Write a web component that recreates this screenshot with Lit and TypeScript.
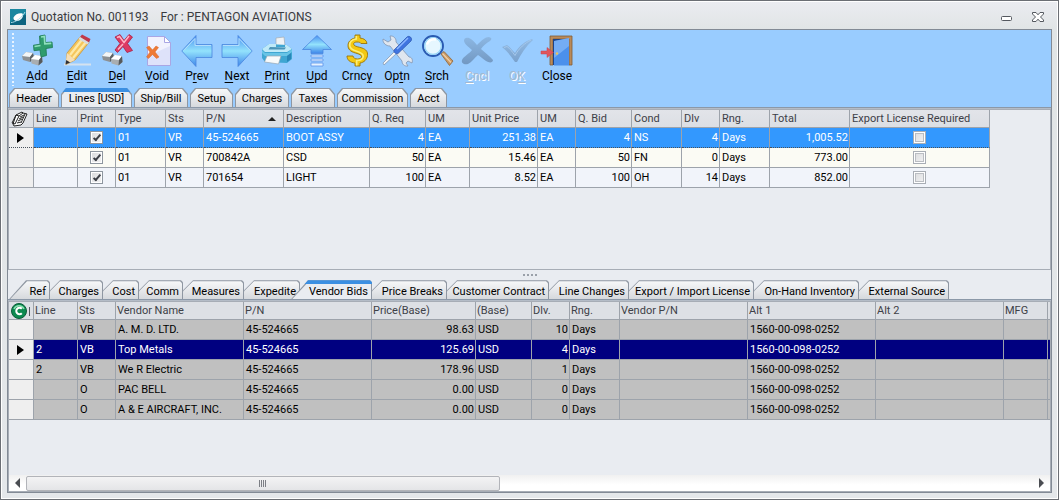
import { LitElement, html, css, svg, nothing } from "lit";
import type { TemplateResult } from "lit";
import { customElement, property } from "lit/decorators.js";
import { classMap } from "lit/directives/class-map.js";
import { styleMap } from "lit/directives/style-map.js";

interface Column {
  label: string;
  width: number;
  align?: "right";
  check?: boolean;
  sorted?: boolean;
}

interface Tab {
  label: string;
  width: number;
  active?: boolean;
}

interface Tool {
  label: string;
  key: number;
  icon: TemplateResult;
  disabled?: boolean;
}

const arrowFill = svg`
  <linearGradient id="g" x1="0" y1="0" x2="0" y2="1">
    <stop offset="0" stop-color="#4a90f2"/><stop offset=".5" stop-color="#93e2fc"/><stop offset="1" stop-color="#3f86ea"/>
  </linearGradient>`;

const boxes = svg`
  <path d="M1 22l4-4 7 1 1 5-4 4-7-2z" fill="#8d9194"/>
  <path d="M1 22l4-4 7 1-3 4z" fill="#f4f6f7"/>
  <path d="M9 23l3-4 1 5-4 4z" fill="#5d6164"/>
  <path d="M10 25l4-4 7 1 .5 6-4 3.500-7-2z" fill="#a9adb0"/>
  <path d="M10 25l4-4 7 1-3 4z" fill="#fff"/>
  <path d="M18 26l3-4 .5 6-4 3.500z" fill="#55595c"/>`;

const icons = {
  add: svg`${boxes}
    <path d="M18.500 2l5.500-1 .5 7.500 6.500-.5.5 5.500-6.500 1 .5 7-5.500 1.500-1-7-6 .7-.5-5.500 6.500-1z" fill="#2f9c6d" stroke="#1c7a50" stroke-width=".8"/>
    <path d="M20 3l3.300-.6.5 7.500 6.500-.5" fill="none" stroke="#8fe0bd" stroke-width="1.600"/>
    <path d="M13.500 12.500l6-1" fill="none" stroke="#8fe0bd" stroke-width="1.400"/>`,
  edit: svg`
    <path d="M3 30.500h27" stroke="#d5e2ee" stroke-width="2"/>
    <path d="M6 19L19 3l9 5.500L14 26l-9 4.500z" fill="#f6c65b" stroke="#c48e34" stroke-width=".7"/>
    <path d="M9 21L21.500 5M12 24L25 8" stroke="#fde9a8" stroke-width="2.200"/>
    <path d="M19 3l2-2.500 8.500 4.500-1.500 3.500z" fill="#c0394b"/>
    <path d="M17.500 5L19 3l9 5.500-1.500 2z" fill="#d8dbe0"/>
    <path d="M6 19l8 7-9.500 4.500z" fill="#f5deb8"/>
    <path d="M5.200 26l4 2.500-4.700 2z" fill="#2d2f38"/>`,
  del: svg`${boxes}
    <path d="M14 3l5-2.500 4 6 5-6L31.500 3l-5 6.500 5 7-5.500 2-4-6-5.500 6-2.500-2.500 5-6.500z" fill="#dc3a62" stroke="#a81d43" stroke-width=".8"/>
    <path d="M16 3.500l2.500-1 4.500 6 5-6.500M17 15.500l5-5.500" fill="none" stroke="#ffb4c6" stroke-width="1.500"/>`,
  void: svg`
    <path d="M6.500 2.500h17l6 6v23h-23z" fill="#f1f2fe" stroke="#a9a6e4"/>
    <path d="M7 22l22-10v19H7z" fill="#d6dcf8" opacity=".7"/>
    <path d="M23.500 2.500v6h6z" fill="#fff" stroke="#a9a6e4"/>
    <path d="M5.500 13.500l2.500-1.500 3.500 4 3.500-4 2.500 1.500-3.500 4.500 4 5-2.500 1.500-4-4-4 4-2-1.500 3.500-5z" fill="#ee7a35" stroke="#d9662a" stroke-width=".5"/>`,
  prev: svg`${arrowFill}
    <path d="M.8 17L15 1.500v9h16v13H15v9z" fill="url(#g)" stroke="#4a86de" stroke-width=".8"/>
    <path d="M2.800 16.500L14 4.500v7h16" fill="none" stroke="#b4defd" stroke-width="1"/>`,
  next: svg`${arrowFill}
    <path d="M31.200 17L17 1.500v9H1v13h16v9z" fill="url(#g)" stroke="#4a86de" stroke-width=".8"/>
    <path d="M29.200 16.500L18 4.500v7H2" fill="none" stroke="#b4defd" stroke-width="1"/>`,
  print: svg`
    <path d="M15 4l8-1 1 9-9 1z" fill="#eef2f5" stroke="#a4acb4" stroke-width=".7"/>
    <path d="M1 15l7-5 18 1 5 4v10l-5 4-22-1-3-4z" fill="#3fa6d2"/>
    <path d="M1 15l7-5h7v3h9l0-2 2 0 5 4-5 3H4z" fill="#bfe9f8"/>
    <path d="M9 13l16 .5-1.500 2H7.500z" fill="#4a94b8"/>
    <path d="M1 16l3 3h22l5-4v3l-5 4H4l-3-3z" fill="#68c4e6"/>
    <path d="M6 22h14l-2.500 8-14-2z" fill="#f8fafb" stroke="#98a8b4" stroke-width=".7"/>
    <path d="M26 22l4-3v6l-4 3z" fill="#2886b8"/>`,
  upd: svg`${arrowFill}
    <path d="M16 1.500L30.500 15.500H22v4H10v-4H1.500z" fill="url(#g)" stroke="#4a86de" stroke-width=".8"/>
    <path d="M10 21h12v2H10zM10 25h12v2H10zM10 29h12v3H10z" fill="#e5f2ff" stroke="#5b93ea" stroke-width=".8"/>`,
  crncy: svg`
    <path d="M14 1h5v3c4 .5 6.500 2 7 5.500h-6C19.500 8.500 18 8 16 8c-3 0-4 1.500-3 3s5 2 8 3c4 1.500 6 3.500 5.500 7.500S23 28.500 19 29v3h-5v-3c-5-.5-8-3-8-7h6c.5 2 2 3 4.500 3s4-1 4-2.500-2-2.300-6-3.500C9 17.500 7 15 7 11.500S9.500 5 14 4z" fill="#f3c813" stroke="#98740a" stroke-width=".9"/>
    <path d="M15.300 2v3C11 5.500 8.700 8 8.700 11.200s3 4.800 7 6.100 6.500 2.300 6.500 5-2.500 4.200-6.500 4.200v5" fill="none" stroke="#fdee7a" stroke-width="1.600"/>`,
  optn: svg`
    <path d="M2 5l5 3 3-2-1-4c4-.5 6.500 3 6 6l13 15c3 0 4 3 3 6l-4-2-2 2 2 3c-4 .5-6-2-6-5L9 12c-4 0-7.500-3-7-7z" fill="#dfe6ef" stroke="#8496b0" stroke-width=".8"/>
    <path d="M3 31l-1-2 12-12 2 2z" fill="#f1f4f8" stroke="#8090a8" stroke-width=".7"/>
    <path d="M13 16L26 3c2-2 6 1 4 4L17 19.500c-2 1-5-1.500-4-3.500z" fill="#3f74e0" stroke="#2a54ad" stroke-width=".7"/>
    <path d="M16 15L27 4" stroke="#8db8ff" stroke-width="1.400"/>`,
  srch: svg`
    <path d="M20 20l3-2.500L32 27l-3.500 4.500z" fill="#c99966" stroke="#8f6437" stroke-width=".8"/>
    <path d="M21.500 19.500L30 28.500" stroke="#f0cfa5" stroke-width="1.200"/>
    <circle cx="12" cy="12" r="10" fill="#e6f7ff" stroke="#2a5bb2" stroke-width="1.900"/>
    <circle cx="12" cy="12" r="8.300" fill="none" stroke="#8fd3f8" stroke-width="1.200"/>
    <path d="M6 10.500c1-4 5-6 9-5" fill="none" stroke="#fff" stroke-width="2.400"/>`,
  cncl: svg`
    <linearGradient id="c" x1="0" y1="0" x2="0" y2="1"><stop offset="0" stop-color="#8cb7e3"/><stop offset="1" stop-color="#7298c2"/></linearGradient>
    <path d="M5 4c3-1 6 1 11 7 5-5 8-8 12-8 3 1 3 2 1 4-4 2-7 5-9 8 4 4 9 7 12 11 0 3-4 3-7 1-3-2-5-4-8-6-4 3-6 7-10 9-4 1-7-1-6-4 2-4 7-6 10-10-4-4-7-5-8-9 0-2 1-3 2-3z" fill="url(#c)"/>`,
  ok: svg`
    <linearGradient id="k" x1="0" y1="0" x2="0" y2="1"><stop offset="0" stop-color="#91bae4"/><stop offset="1" stop-color="#7aa2cd"/></linearGradient>
    <path d="M1 13l5-2c3 2 5 5 8 8C18 12 24 7 31 5l1 1c-7 6-12 14-16 22h-2C10 22 6 17 1 13z" fill="url(#k)"/>
    <path d="M3 13.500l3-1c3 2 5 5 8 9C18 14 24 9 30 6" fill="none" stroke="#a5c8ec" stroke-width="1"/>`,
  close: svg`
    <path d="M9 2h22v29h-3V5H12v26H9z" fill="#b98a5a" stroke="#7d5a36" stroke-width=".8"/>
    <path d="M12 5h16v26H12z" fill="#1c4388"/>
    <path d="M13 7l15-3v27.500l-15 0z" fill="#4b90ec"/>
    <path d="M13 7l15-3v8L13 24z" fill="#8abdf9" opacity=".65"/>
    <circle cx="16" cy="19.500" r="1.200" fill="#ecc65a"/>
    <path d="M0 17h6v-3.500l6.500 5L6 23.500V20H0z" fill="#e0555c" stroke="#c8424a" stroke-width=".5"/>`,
};

const tools: Tool[] = [
  { label: "Add", key: 0, icon: icons.add },
  { label: "Edit", key: 0, icon: icons.edit },
  { label: "Del", key: 0, icon: icons.del },
  { label: "Void", key: 0, icon: icons.void },
  { label: "Prev", key: 1, icon: icons.prev },
  { label: "Next", key: 0, icon: icons.next },
  { label: "Print", key: 0, icon: icons.print },
  { label: "Upd", key: 0, icon: icons.upd },
  { label: "Crncy", key: 4, icon: icons.crncy },
  { label: "Optn", key: 2, icon: icons.optn },
  { label: "Srch", key: 0, icon: icons.srch },
  { label: "Cncl", key: 0, icon: icons.cncl, disabled: true },
  { label: "OK", key: 1, icon: icons.ok, disabled: true },
  { label: "Close", key: 1, icon: icons.close },
];

const mainTabs: Tab[] = [
  { label: "Header", width: 50 },
  { label: "Lines [USD]", width: 71, active: true },
  { label: "Ship/Bill", width: 54 },
  { label: "Setup", width: 43 },
  { label: "Charges", width: 54 },
  { label: "Taxes", width: 44 },
  { label: "Commission", width: 71 },
  { label: "Acct", width: 37 },
];

const detailTabs: Tab[] = [
  { label: "Ref", width: 41 },
  { label: "Charges", width: 53 },
  { label: "Cost", width: 36 },
  { label: "Comm", width: 44 },
  { label: "Measures", width: 61 },
  { label: "Expedite", width: 56 },
  { label: "Vendor Bids", width: 81, active: true },
  { label: "Price Breaks", width: 75 },
  { label: "Customer Contract", width: 102 },
  { label: "Line Changes", width: 80 },
  { label: "Export / Import License", width: 125 },
  { label: "On-Hand Inventory", width: 105 },
  { label: "External Source", width: 90 },
];

const lineColumns: Column[] = [
  { label: "Line", width: 44 },
  { label: "Print", width: 38, check: true },
  { label: "Type", width: 50 },
  { label: "Sts", width: 38 },
  { label: "P/N", width: 80, sorted: true },
  { label: "Description", width: 86 },
  { label: "Q. Req", width: 56, align: "right" },
  { label: "UM", width: 44 },
  { label: "Unit Price", width: 68, align: "right" },
  { label: "UM", width: 38 },
  { label: "Q. Bid", width: 56, align: "right" },
  { label: "Cond", width: 50 },
  { label: "Dlv", width: 38, align: "right" },
  { label: "Rng.", width: 50 },
  { label: "Total", width: 80, align: "right" },
  { label: "Export License Required", width: 140, check: true },
];

const lineRows = [
  ["", "x", "01", "VR", "45-524665", "BOOT ASSY", "4", "EA", "251.38", "EA", "4", "NS", "4", "Days", "1,005.52", ""],
  ["", "x", "01", "VR", "700842A", "CSD", "50", "EA", "15.46", "EA", "50", "FN", "0", "Days", "773.00", ""],
  ["", "x", "01", "VR", "701654", "LIGHT", "100", "EA", "8.52", "EA", "100", "OH", "14", "Days", "852.00", ""],
];

const bidColumns: Column[] = [
  { label: "Line", width: 44 },
  { label: "Sts", width: 38 },
  { label: "Vendor Name", width: 128 },
  { label: "P/N", width: 128 },
  { label: "Price(Base)", width: 104, align: "right" },
  { label: "(Base)", width: 56 },
  { label: "Dlv.", width: 38, align: "right" },
  { label: "Rng.", width: 50 },
  { label: "Vendor P/N", width: 128 },
  { label: "Alt 1", width: 128 },
  { label: "Alt 2", width: 128 },
  { label: "MFG", width: 44 },
  { label: "", width: 60 },
];

const alt = "1560-00-098-0252";
const bidRows = [
  ["", "VB", "A. M. D. LTD.", "45-524665", "98.63", "USD", "10", "Days", "", alt, "", "", ""],
  ["2", "VB", "Top Metals", "45-524665", "125.69", "USD", "4", "Days", "", alt, "", "", ""],
  ["2", "VB", "We R Electric", "45-524665", "178.96", "USD", "1", "Days", "", alt, "", "", ""],
  ["", "O", "PAC BELL", "45-524665", "0.00", "USD", "0", "Days", "", alt, "", "", ""],
  ["", "O", "A & E AIRCRAFT, INC.", "45-524665", "0.00", "USD", "0", "Days", "", alt, "", "", ""],
];

const notesIcon = html`
  <svg class="corner" viewBox="0 0 18 16" width="18" height="16">
    <path d="M5 4l6-3 1 1 4 1-4 9-2 2-7 1-1-2z" fill="#fff" stroke="#222" stroke-width="1"/>
    <path d="M5 4l3 1-4 8-3-1zM8 5l4-3M9 6l4-2M8 8l4-2M7 10l4-2M6 12l4-1M14 3l-4 9" fill="none" stroke="#222" stroke-width="1"/>
  </svg>`;

const copyIcon = html`
  <svg class="corner" viewBox="0 0 20 16" width="20" height="16">
    <circle cx="9" cy="8" r="7.500" fill="#0c8a50" stroke="#0a5c38"/>
    <path d="M4 6a5.500 5.500 0 0 1 10 0" fill="none" stroke="#8be0b0" stroke-width="1.500"/>
    <path d="M11.800 5.800a3.200 3.200 0 1 0 0 4.400" fill="none" stroke="#fff" stroke-width="2"/>
    <path d="M19.500 4v9" stroke="#555a62"/>
  </svg>`;

@customElement("data-grid")
export class DataGrid extends LitElement {
  @property({ attribute: false }) columns: Column[] = [];
  @property({ attribute: false }) rows: string[][] = [];
  @property({ attribute: false }) corner: unknown = nothing;
  @property({ type: Number }) current = 0;
  @property() tone = "light";

  static styles = css`
    :host { display: block; overflow: hidden; }
    .grid { table-layout: fixed; border-collapse: separate; border-spacing: 0; width: 0; }
    .selector { width: 25px; }
    th, td {
      box-sizing: border-box; height: 20px; padding: 0 3px 0 2px;
      border: 0 solid #9da3ab; border-width: 0 1px 1px 0;
      font-weight: 400; text-align: left; white-space: nowrap; overflow: hidden; line-height: 16px;
    }
    th { height: 18px; padding: 0 1px 0 2px; background: linear-gradient(#e2e4e9, #dcdfe4); color: #3d4047; }
    .dark th { background: #dde0e5; padding-left: 1px; }
    .head { display: flex; align-items: center; justify-content: space-between; }
    .sort { width: 0; margin-right: 6px; border: 4px solid transparent; border-top: 0; border-bottom-color: #222; }
    .corner { display: block; }
    .right { text-align: right; padding-right: 1px; }
    .center { text-align: center; padding: 0; }
    .mark { background: #efefef; padding: 0; }
    .pointer { display: block; width: 0; margin-left: 8px; border: 5px solid transparent; border-left: 7px solid #000; border-right: 0; }
    .light .row:nth-child(even) { background: #fbfbf4; }
    .light .row:nth-child(odd) { background: #f1f4fa; }
    .light .row.current { background: #3398fe; color: #fff; }
    .light .current td { border-bottom: 1px dotted #48515c; }
    .dark .row { background: #c0c0c0; }
    .dark .row.current { background: #000080; color: #fff; }
    .check {
      appearance: none; display: block; width: 13px; height: 13px; margin: 0 auto; box-sizing: border-box;
      border: 1px solid #8e969f; background: linear-gradient(135deg, #dadbdd, #f3f3f4); box-shadow: inset 0 0 0 1px #fff;
      position: relative;
    }
    .check:disabled { border-color: #a9aeb5; }
    .check:disabled::before { content: ""; position: absolute; inset: 1px; border: 1px solid #babdc2; }
    .check:checked::after {
      content: ""; position: absolute; left: 4px; top: 1px; width: 2px; height: 6px;
      border: solid #3c3f46; border-width: 0 2px 2px 0; rotate: 40deg;
    }
  `;

  private cell(c: Column, value: string, row: number) {
    if (c.check) {
      return html`<td class="center"><input class="check" type="checkbox" aria-label="${c.label}, row ${row + 1}"
        .checked=${value === "x"} ?disabled=${value !== "x"}></td>`;
    }
    return html`<td class=${c.align === "right" ? "right" : ""}>${value}</td>`;
  }

  render() {
    return html`
      <table class="grid ${this.tone}">
        <colgroup>
          <col class="selector">
          ${this.columns.map((c) => html`<col style=${styleMap({ width: `${c.width}px` })}>`)}
        </colgroup>
        <thead>
          <tr>
            <th>${this.corner}</th>
            ${this.columns.map((c) => html`<th scope="col">${c.sorted
              ? html`<span class="head">${c.label}<i class="sort"></i></span>` : c.label}</th>`)}
          </tr>
        </thead>
        <tbody>
          ${this.rows.map((r, i) => html`
            <tr class=${classMap({ row: true, current: i === this.current })}>
              <td class="mark">${i === this.current ? html`<i class="pointer"></i>` : nothing}</td>
              ${this.columns.map((c, k) => this.cell(c, r[k], i))}
            </tr>`)}
        </tbody>
      </table>`;
  }
}

@customElement("tab-strip")
export class TabStrip extends LitElement {
  @property({ attribute: false }) tabs: Tab[] = [];
  @property() shape = "chamfer";

  static styles = css`
    :host { display: block; }
    .strip { display: flex; height: 19px; padding-left: 1px; }
    .tab {
      flex: none; position: relative; z-index: 0; height: 19px; padding: 0; border: 0; background: #8f97a2;
      font: inherit; line-height: 19px; color: #000; white-space: nowrap;
    }
    .tab::before, .tab::after { content: ""; position: absolute; z-index: -1; inset: 1px 1px 0; background: linear-gradient(#f7f8f9, #d6d9dd); }
    .tab::after { display: none; }
    .tab.active::before { background: #e9ecf1; }
    .chamfer { gap: 2px; }
    .chamfer .tab, .chamfer .tab::before { clip-path: polygon(0 100%, 0 6px, 5px 0, calc(100% - 5px) 0, 100% 6px, 100% 100%); }
    .chamfer .tab { padding-top: 3px; line-height: 16px; }
    .chamfer .active::after { display: block; inset: 0 0 auto; height: 4px; background: #3b8fe2; }
    .slant .tab { padding: 4px 4px 0 0; text-align: right; line-height: 15px; }
    .slant .tab, .slant .tab::before {
      clip-path: polygon(0 100%, 0 10px, 10px 0, calc(100% - 2px) 0, 100% 2px, 100% 100%);
    }
    .slant .tab:not(.active):not(:first-child)::before { left: 0; }
    .slant .active { z-index: 1; margin-left: -9px; }
    .slant .active, .slant .active::before, .slant .tab:first-child, .slant .tab:first-child::before {
      clip-path: polygon(0 100%, 17px 0, calc(100% - 2px) 0, 100% 2px, 100% 100%);
    }
    .slant .active::after { display: block; inset: 0 0 auto; height: 4px; background: #3b8fe2; }
  `;

  render() {
    return html`<div class="strip ${this.shape}" role="tablist">
      ${this.tabs.map((t) => html`<button type="button" role="tab" aria-selected=${t.active ? "true" : "false"}
        class=${classMap({ tab: true, active: !!t.active })}
        style=${styleMap({ width: `${t.width}px` })}>${t.label}</button>`)}
    </div>`;
  }
}

@customElement("tool-bar")
export class ToolBar extends LitElement {
  static styles = css`
    :host { display: block; }
    .bar { display: flex; height: 58px; padding-left: 4px; }
    .grip {
      flex: none; width: 2px; margin: 3px 3px 2px 0;
      background: repeating-linear-gradient(#e8f3ff 0 2px, transparent 2px 4px);
    }
    .tool {
      flex: none; display: flex; flex-direction: column; align-items: center; gap: 1px; width: 40px;
      padding: 4px 0 0; border: 0; background: none; font: 12px/16px Roboto, "Open Sans", sans-serif; color: #000;
    }
    .tool:disabled { color: #a3b8d0; text-shadow: 1px 1px 0 #fff; }
    .icon { display: block; overflow: visible; }
    u { text-underline-offset: 2px; }
  `;

  render() {
    return html`<div class="bar" role="toolbar">
      <span class="grip"></span>
      ${tools.map((t) => html`<button type="button" class="tool" ?disabled=${t.disabled}>
        <svg class="icon" viewBox="0 0 33 33" width="33" height="33">${t.icon}</svg>
        <span>${t.label.slice(0, t.key)}<u>${t.label[t.key]}</u>${t.label.slice(t.key + 1)}</span>
      </button>`)}
    </div>`;
  }
}

@customElement("app-root")
export class AppRoot extends LitElement {
  static styles = css`
    :host {
      display: flex; flex-direction: column; box-sizing: border-box; height: 100vh; padding: 0 6px 6px;
      border: 1px solid #6b6e74; box-shadow: inset 0 0 0 1px #fff; background: #e4e7e9;
      background: linear-gradient(#ebecf1, #e0e4e5 30px, #e4e7ea);
      font: 11px/16px Roboto, "Open Sans", sans-serif; color: #000;
    }
    .title { flex: none; display: flex; align-items: center; height: 28px; padding: 3px 8px 0 3px; box-sizing: border-box; }
    .caption { display: flex; flex: 1; gap: 12px; margin: 0 0 0 5px; font-size: 12px; font-weight: 400; color: #3a3b40; white-space: nowrap; }
    .window { display: flex; gap: 19px; }
    .chrome { display: block; padding: 0; border: 0; background: none; }
    .chrome svg, .logo { display: block; }
    .client {
      flex: 1; min-height: 0; display: flex; flex-direction: column;
      border: 1px solid #828a95; background: #e9ecf1;
    }
    .top { flex: none; background: #99ccff; }
    .rule { flex: none; height: 2px; background: linear-gradient(#8b98a8 50%, #b4bcc7 50%); }
    .panel { display: flex; flex-direction: column; min-height: 0; box-sizing: border-box; border: 1px solid #a7adb6; }
    .lines { flex: 161 1 0; }
    .bids { flex: 191 1 0; }
    .fill { flex: 1; min-height: 0; background: #e9ecf1; }
    .splitter { flex: none; display: flex; justify-content: center; align-items: center; gap: 2px; height: 10px; }
    .dot { width: 2px; height: 2px; background: #9aa0a9; }
    .scroll { flex: none; display: flex; align-items: center; height: 16px; background: linear-gradient(#f0f0f0, #fff 60%); }
    .arrow { flex: none; width: 17px; height: 16px; padding: 0; border: 0; background: none; }
    .arrow svg { display: block; margin: auto; }
    .track { flex: 1; display: flex; }
    .thumb {
      display: flex; justify-content: center; align-items: center; gap: 1px; height: 15px; box-sizing: border-box;
      border: 1px solid #b2b4b9; border-radius: 2px; background: linear-gradient(#f3f3f4, #e4e5e7);
    }
    .ridge { width: 1px; height: 7px; background: #7c7f85; }
  `;

  render() {
    return html`
      <header class="title">
        <svg class="logo" viewBox="0 0 16 16" width="16" height="16">
          <rect width="16" height="16" fill="#0d6480"/>
          <path d="M0 0h16v6C10 6 4 10 0 14z" fill="#1b87a0"/>
          <path d="M3.500 8.500C5 5 10 3.500 12.500 4.500c1.500 3-1 6.500-4.500 7.300-2.500.6-5-.8-4.500-3.300z" fill="#fff"/>
          <path d="M1 13.500C5 13.500 12 9 15 3" fill="none" stroke="#a9dcea" stroke-width="1"/>
        </svg>
        <h1 class="caption"><span>Quotation No. 001193</span><span>For : PENTAGON AVIATIONS</span></h1>
        <div class="window">
          <button type="button" class="chrome" aria-label="Minimize">
            <svg viewBox="0 0 12 10" width="12" height="10"><rect x=".5" y="4.500" width="10" height="4" rx="1" fill="#fff" stroke="#54585f"/></svg>
          </button>
          <button type="button" class="chrome" aria-label="Close window">
            <svg viewBox="0 0 12 10" width="12" height="10"><path d="M.5 .5h3.500L6 2.800 8 .5h3.500v1.500L8.500 5l3 3v1.500H8L6 7.200 4 9.500H.5V8l3-3-3-3z" fill="#fff" stroke="#54585f"/></svg>
          </button>
        </div>
      </header>
      <main class="client">
        <div class="top">
          <tool-bar></tool-bar>
          <tab-strip .tabs=${mainTabs} shape="chamfer"></tab-strip>
        </div>
        <div class="rule"></div>
        <section class="panel lines">
          <data-grid .columns=${lineColumns} .rows=${lineRows} .corner=${notesIcon} tone="light" current="0"></data-grid>
        </section>
        <div class="splitter"><i class="dot"></i><i class="dot"></i><i class="dot"></i><i class="dot"></i></div>
        <tab-strip .tabs=${detailTabs} shape="slant"></tab-strip>
        <div class="rule"></div>
        <section class="panel bids">
          <data-grid class="fill" .columns=${bidColumns} .rows=${bidRows} .corner=${copyIcon} tone="dark" current="1"></data-grid>
          <div class="scroll">
            <button type="button" class="arrow" aria-label="Scroll left"><svg viewBox="0 0 5 10" width="5" height="10"><path d="M5 0v10L0 5z" fill="#4a4d52"/></svg></button>
            <div class="track">
              <div class="thumb" style=${styleMap({ width: `${(474 / 1008) * 100}%` })}>
                <i class="ridge"></i><i class="ridge"></i><i class="ridge"></i><i class="ridge"></i>
              </div>
            </div>
            <button type="button" class="arrow" aria-label="Scroll right"><svg viewBox="0 0 5 10" width="5" height="10"><path d="M0 0v10l5-5z" fill="#4a4d52"/></svg></button>
          </div>
        </section>
      </main>`;
  }
}
